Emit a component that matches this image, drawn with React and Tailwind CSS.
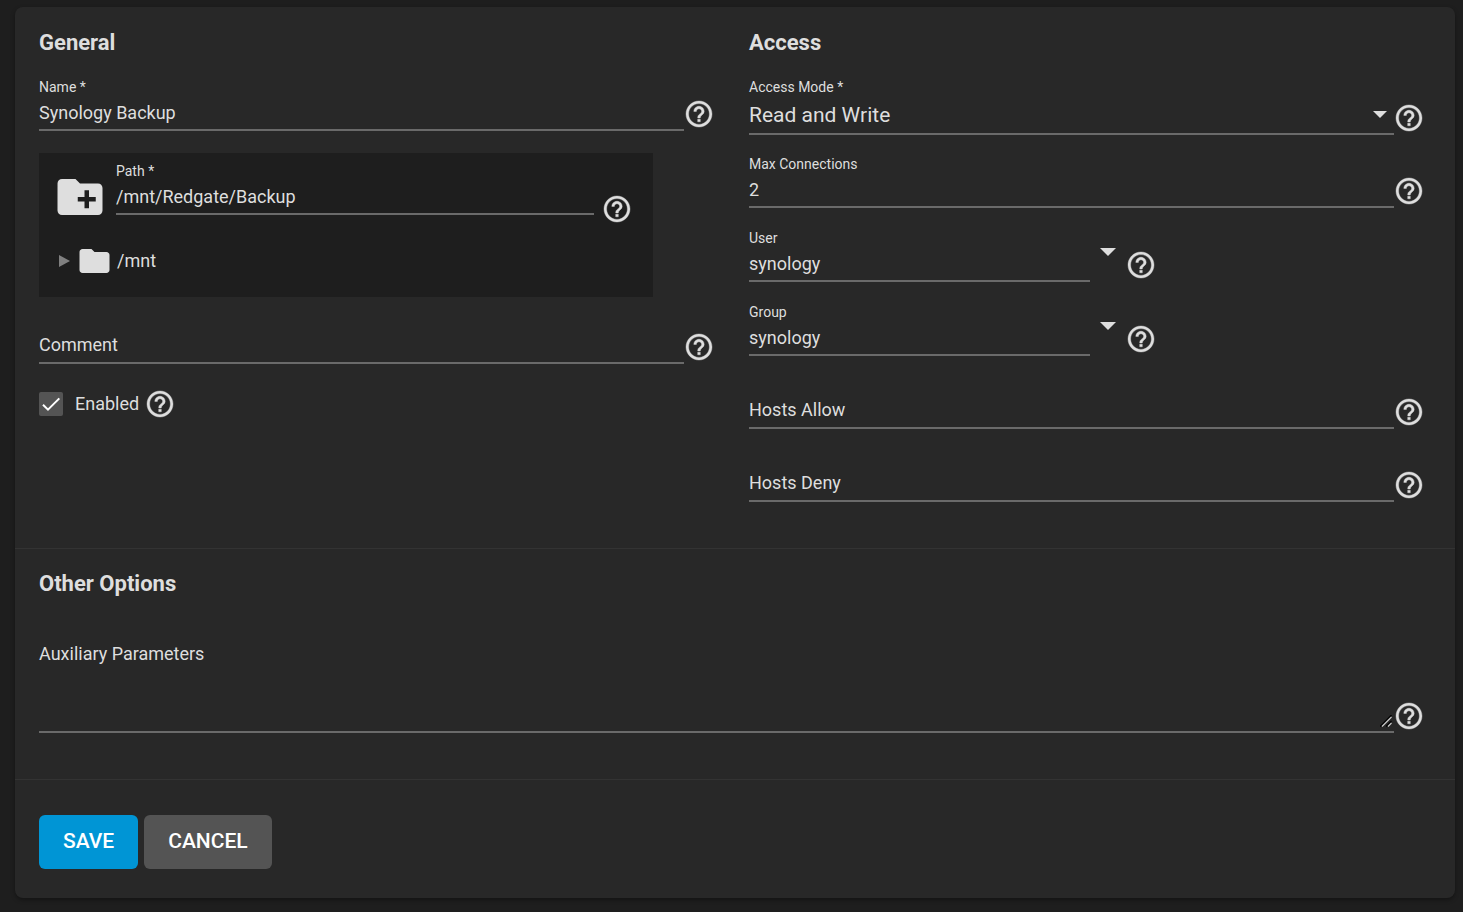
import React, { useState } from 'react';
import { MdCreateNewFolder, MdFolder } from 'react-icons/md';

const HelpButton = ({ topic, className = '' }) => (
  <button type="button" aria-label={`Help: ${topic}`} className={`shrink-0 cursor-pointer ${className}`}>
    <svg viewBox="2 2 20 20" className="block size-[26px] fill-current stroke-current stroke-[0.3] overflow-visible">
      <path d="M11 18h2v-2h-2v2zm1-16C6.48 2 2 6.48 2 12s4.48 10 10 10 10-4.48 10-10S17.52 2 12 2zm0 18c-4.41 0-8-3.59-8-8s3.59-8 8-8 8 3.59 8 8-3.59 8-8 8zm0-14c-2.21 0-4 1.79-4 4h2c0-1.1.9-2 2-2s2 .9 2 2c0 2-3 1.75-3 5h2c0-2.25 3-2.5 3-5 0-2.21-1.79-4-4-4z" />
    </svg>
  </button>
);

const Caret = ({ className = '' }) => (
  <svg viewBox="0 0 10 5" className={`fill-current ${className}`}>
    <path d="M0 0h10L5 5z" />
  </svg>
);

// The label sits on the line while the field is empty and floats above it once filled
const TextField = ({ id, label, defaultValue, className = 'flex-1' }) => (
  <div className={`relative min-w-0 pt-5 ${className}`}>
    <input
      id={id}
      type="text"
      placeholder=" "
      defaultValue={defaultValue}
      className="peer block h-[34px] w-full border-b-2 border-[#6a6a6a] bg-transparent pb-[2px] text-lg outline-none focus:border-[#0095d5]"
    />
    <label
      htmlFor={id}
      className="pointer-events-none absolute top-0 left-0 text-sm leading-5 peer-placeholder-shown:top-5 peer-placeholder-shown:text-lg peer-placeholder-shown:leading-[30px]"
    >
      {label}
    </label>
  </div>
);

const FieldRow = ({ id, label, defaultValue }) => (
  <div className="flex items-end gap-0.5">
    <TextField id={id} label={label} defaultValue={defaultValue} />
    <HelpButton topic={label} className="mb-1" />
  </div>
);

const ComboRow = ({ id, label, defaultValue }) => (
  <div className="flex items-end pt-px">
    <TextField id={id} label={label} defaultValue={defaultValue} className="w-[341px]" />
    <button type="button" aria-label={`Show ${label} options`} className="ml-[10px] self-start pt-5">
      <Caret className="h-2 w-4" />
    </button>
    <HelpButton topic={label} className="mb-1 ml-3" />
  </div>
);

const SectionTitle = ({ children }) => (
  <h2 className="text-[22px] leading-8 font-bold">{children}</h2>
);

const PathPicker = () => (
  <div className="mt-[22px] mr-[59px] bg-[#1e1e1e] pt-2 pb-6">
    <div className="flex items-start pr-[23px] pl-[18px]">
      <MdCreateNewFolder viewBox="2 4 20 16" className="mt-[18px] h-9 w-[46px] shrink-0" />
      <div className="ml-[13px] flex flex-1 items-start gap-[10px]">
        <TextField id="path" label="Path *" defaultValue="/mnt/Redgate/Backup" />
        <HelpButton topic="Path" className="mt-[35px]" />
      </div>
    </div>
    <button type="button" className="mt-[27px] ml-5 flex items-center">
      <svg viewBox="0 0 11 12" className="h-3 w-[11px] fill-[#808080]">
        <path d="M0 0l11 6-11 6z" />
      </svg>
      <MdFolder viewBox="2 4 20 16" className="ml-[9px] h-6 w-[31px]" />
      <span className="ml-[7px] text-lg leading-6">/mnt</span>
    </button>
  </div>
);

const EnabledRow = () => {
  const [enabled, setEnabled] = useState(true);

  return (
    <div className="mt-[27px] flex items-center">
      <div className="grid size-6">
        <input
          id="enabled"
          type="checkbox"
          checked={enabled}
          onChange={(e) => setEnabled(e.target.checked)}
          className="col-start-1 row-start-1 appearance-none rounded-xs bg-[#545454]"
        />
        {enabled && (
          <svg viewBox="0 0 24 24" className="pointer-events-none col-start-1 row-start-1 fill-none stroke-white stroke-2">
            <path d="M4 12.7l5 5L20.3 6.4" />
          </svg>
        )}
      </div>
      <label htmlFor="enabled" className="ml-3 text-lg leading-6">Enabled</label>
      <HelpButton topic="Enabled" className="ml-2" />
    </div>
  );
};

const App = () => (
  <div className="min-h-screen bg-[#1e1e1e] pt-[7px] pr-2 pb-[14px] pl-[15px] font-[Roboto,sans-serif] text-[#dedede]">
    <form
      onSubmit={(e) => e.preventDefault()}
      className="rounded-lg bg-[#282828] shadow-[0_2px_4px_rgba(0,0,0,0.35)]"
    >
      <div className="grid grid-cols-2 gap-[37px] pt-5 pr-[33px] pb-[46px] pl-6">
        <section>
          <SectionTitle>General</SectionTitle>
          <div className="mt-[18px]">
            <FieldRow id="name" label="Name *" defaultValue="Synology Backup" />
          </div>
          <PathPicker />
          <div className="mt-[13px]">
            <FieldRow id="comment" label="Comment" />
          </div>
          <EnabledRow />
        </section>

        <section>
          <SectionTitle>Access</SectionTitle>
          <div className="mt-[18px] flex flex-col gap-[19px]">
            <div className="flex items-end gap-0.5">
              <div className="relative flex-1">
                <label htmlFor="mode" className="block text-sm leading-5">Access Mode *</label>
                <select
                  id="mode"
                  defaultValue="rw"
                  className="block h-[38px] w-full appearance-none border-b-2 border-[#6a6a6a] bg-transparent pt-px text-[21px] outline-none"
                >
                  <option value="ro" className="bg-[#282828]">Read Only</option>
                  <option value="wo" className="bg-[#282828]">Write Only</option>
                  <option value="rw" className="bg-[#282828]">Read and Write</option>
                </select>
                <Caret className="pointer-events-none absolute right-[7px] bottom-[17px] h-[7px] w-[14px]" />
              </div>
              <HelpButton topic="Access Mode" className="mb-1" />
            </div>
            <FieldRow id="connections" label="Max Connections" defaultValue="2" />
            <ComboRow id="user" label="User" defaultValue="synology" />
            <ComboRow id="group" label="Group" defaultValue="synology" />
            <FieldRow id="hosts-allow" label="Hosts Allow" />
            <FieldRow id="hosts-deny" label="Hosts Deny" />
          </div>
        </section>
      </div>

      <section className="border-t border-[#333] pt-[19px] pr-[33px] pb-[46px] pl-6">
        <SectionTitle>Other Options</SectionTitle>
        <div className="mt-[38px] flex items-end gap-0.5">
          <div className="relative flex-1">
            <textarea
              id="aux"
              placeholder=" "
              className="peer block h-[95px] w-full resize-y border-b-2 border-[#6a6a6a] bg-transparent text-lg leading-8 outline-none [&::-webkit-resizer]:bg-transparent"
            />
            <label
              htmlFor="aux"
              className="pointer-events-none absolute top-0 left-0 text-lg leading-8 peer-[:not(:placeholder-shown)]:-top-5 peer-[:not(:placeholder-shown)]:text-sm"
            >
              Auxiliary Parameters
            </label>
            <svg viewBox="0 0 12 12" className="pointer-events-none absolute right-[2px] bottom-[6px] size-3 fill-none">
              <path d="M0 11.5L11.5 0M6 11.5L11.5 6" className="stroke-black stroke-[1.2]" />
              <path d="M2 11.5L11.5 2M8 11.5L11.5 8" className="stroke-[#c8c8c8] stroke-[1.2]" />
            </svg>
          </div>
          <HelpButton topic="Auxiliary Parameters" className="mb-1" />
        </div>
      </section>

      <div className="flex gap-[6px] border-t border-[#333] px-6 pt-[35px] pb-[29px] text-[21px] font-medium text-white">
        <button type="submit" className="h-[54px] rounded-md bg-[#0095d5] px-6">SAVE</button>
        <button type="button" className="h-[54px] rounded-md bg-[#545454] px-6">CANCEL</button>
      </div>
    </form>
  </div>
);

export default App;
